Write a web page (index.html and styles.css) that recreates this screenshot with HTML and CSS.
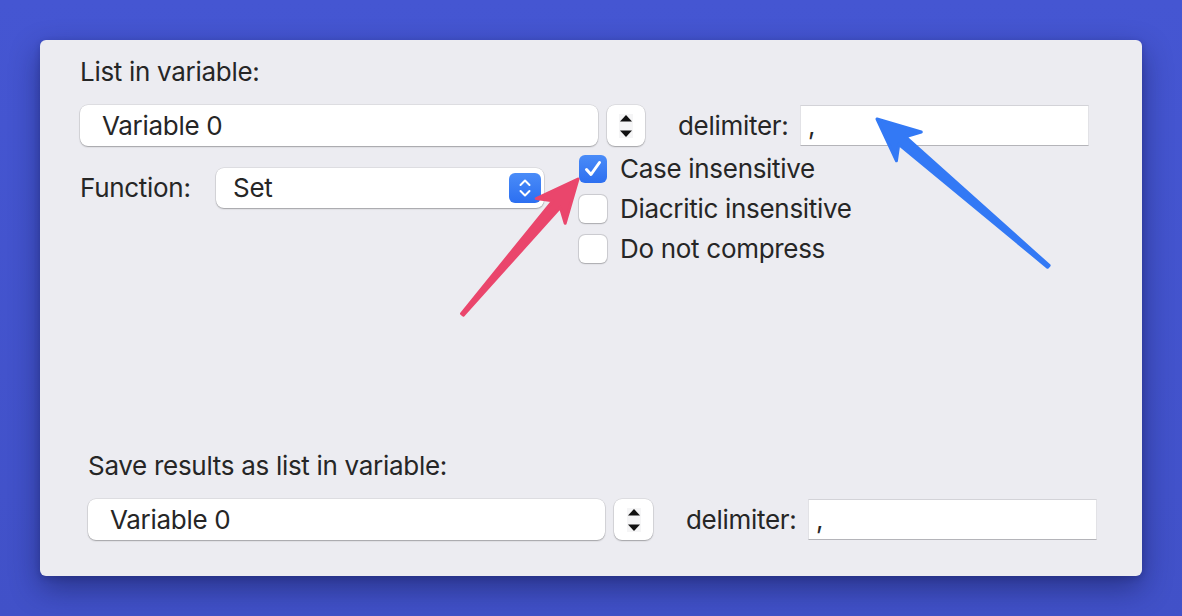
FILE: index.html
```html
<!DOCTYPE html>
<html>
<head>
<meta charset="utf-8">
<link rel="stylesheet" href="styles.css">
</head>
<body>
<div class="panel">
  <div class="section-top">
    <div class="label">List in variable:</div>
    <div class="var-row">
      <div class="popup popup-var"><span>Variable 0</span></div>
      <div class="stepper">
        <svg width="14" height="24" viewBox="0 0 14 24"><rect x="-3" y="-1" width="20" height="26" fill="#f5f5f6"/><polygon points="7,1 13,7.5 1,7.5" fill="#111"/><polygon points="1,16.5 13,16.5 7,23" fill="#111"/></svg>
      </div>
      <div class="delim-label">delimiter:</div>
      <div class="field">,</div>
    </div>
    <div class="fn-row">
      <div class="fn-group">
        <div class="fn-label">Function:</div>
        <div class="popup popup-fn">
          <span>Set</span>
          <div class="popup-btn">
            <svg width="14" height="22" viewBox="0 0 14 22"><path d="M2.5 8 L7 3.5 L11.5 8" fill="none" stroke="#fff" stroke-width="2" stroke-linecap="round" stroke-linejoin="round"/><path d="M2.5 14 L7 18.5 L11.5 14" fill="none" stroke="#fff" stroke-width="2" stroke-linecap="round" stroke-linejoin="round"/></svg>
          </div>
        </div>
      </div>
      <div class="options">
        <div class="option">
          <div class="check checked">
            <svg width="28" height="28" viewBox="0 0 28 28"><path d="M7.5 14.5 L12 19.5 L20.5 7.5" fill="none" stroke="#fff" stroke-width="3" stroke-linecap="round" stroke-linejoin="round"/></svg>
          </div>
          <span>Case insensitive</span>
        </div>
        <div class="option">
          <div class="check"></div>
          <span>Diacritic insensitive</span>
        </div>
        <div class="option">
          <div class="check"></div>
          <span>Do not compress</span>
        </div>
      </div>
    </div>
  </div>
  <div class="section-bottom">
    <div class="label">Save results as list in variable:</div>
    <div class="var-row">
      <div class="popup popup-var2"><span>Variable 0</span></div>
      <div class="stepper stepper2">
        <svg width="14" height="24" viewBox="0 0 14 24"><rect x="-3" y="-1" width="20" height="26" fill="#f5f5f6"/><polygon points="7,1 13,7.5 1,7.5" fill="#111"/><polygon points="1,16.5 13,16.5 7,23" fill="#111"/></svg>
      </div>
      <div class="delim-label">delimiter:</div>
      <div class="field">,</div>
    </div>
  </div>
</div>
<svg class="arrows" width="1182" height="616" viewBox="0 0 1182 616">
  <g transform="translate(578,179) rotate(-49.5)" fill="#ea466c" stroke="#ea466c" stroke-width="3" stroke-linejoin="round" stroke-linecap="round">
    <polygon points="0,0 -42,-19 -33,-5 -178,-1.2 -178,1.2 -33,5 -42,19"/>
  </g>
  <g transform="translate(877,119) rotate(-139.3)" fill="#3379f5" stroke="#3379f5" stroke-width="3" stroke-linejoin="round" stroke-linecap="round">
    <polygon points="0,0 -42,-19 -33,-5 -226,-1.2 -226,1.2 -33,5 -42,19"/>
  </g>
</svg>
</body>
</html>
```
FILE: styles.css
```css
* { box-sizing: border-box; }
html, body {
  margin: 0;
  padding: 0;
}
body {
  width: 1182px;
  height: 616px;
  overflow: hidden;
  background: linear-gradient(180deg, #4556d2 0%, #4151c8 100%);
  font-family: "Inter", "Liberation Sans", sans-serif;
  font-size: 26px;
  letter-spacing: -0.3px;
  color: #262626;
  position: relative;
  padding-top: 40px;
}
.panel {
  margin: 0 40px;
  width: 1102px;
  height: 536px;
  background: #ececf1;
  border-radius: 6px;
  box-shadow: 0 12px 30px rgba(10, 15, 60, 0.45), 0 2px 6px rgba(10, 15, 60, 0.2);
  display: flex;
  flex-direction: column;
}
.section-top {
  padding-left: 40px;
  padding-top: 17px;
}
.label {
  line-height: 30px;
  height: 30px;
  white-space: nowrap;
}
.var-row {
  display: flex;
  align-items: center;
  margin-top: 18px;
  height: 41px;
}
.popup {
  background: #fff;
  border-radius: 8px;
  box-shadow: 0 0 0 0.5px rgba(0, 0, 0, 0.12), 0 1px 1.5px rgba(0, 0, 0, 0.28);
  display: flex;
  align-items: center;
  height: 41px;
  line-height: 30px;
}
.popup-var {
  width: 518px;
  padding-left: 22px;
}
.popup-var2 {
  width: 517px;
  padding-left: 22px;
}
.stepper {
  width: 38px;
  height: 41px;
  margin-left: 9px;
  background: #fff;
  border-radius: 8px;
  box-shadow: 0 0 0 0.5px rgba(0, 0, 0, 0.12), 0 1px 1.5px rgba(0, 0, 0, 0.28);
  display: flex;
  align-items: center;
  justify-content: center;
}
.stepper svg { display: block; }
.stepper2 { width: 39px; }
.delim-label {
  width: 112px;
  margin-left: 33px;
  margin-right: 10px;
  line-height: 30px;
  white-space: nowrap;
}
.field {
  width: 289px;
  height: 41px;
  background: #fff;
  border-top: 1px solid #d3d3d8;
  border-left: 1px solid #e2e2e6;
  border-right: 1px solid #e2e2e6;
  border-bottom: 1.5px solid #b4b4b9;
  padding-left: 7px;
  line-height: 40px;
}
.fn-row {
  display: flex;
  align-items: flex-start;
  margin-top: 9px;
}
.fn-group {
  width: 499px;
  display: flex;
  align-items: center;
  margin-top: 13px;
}
.fn-label {
  width: 136px;
  line-height: 30px;
}
.popup-fn {
  width: 328px;
  height: 40px;
  padding-left: 17px;
  padding-right: 3px;
  justify-content: space-between;
}
.popup-btn {
  width: 32px;
  height: 30px;
  border-radius: 6px;
  background: linear-gradient(180deg, #4a8cf8 0%, #2c6ff1 100%);
  display: flex;
  align-items: center;
  justify-content: center;
}
.popup-btn svg { display: block; }
.options {
  display: flex;
  flex-direction: column;
  gap: 12px;
}
.option {
  display: flex;
  align-items: center;
  gap: 13px;
  height: 28px;
  line-height: 30px;
  white-space: nowrap;
}
.check {
  width: 28px;
  height: 28px;
  flex: none;
  border-radius: 6px;
  background: #fff;
  box-shadow: 0 0 0 1px rgba(0, 0, 0, 0.1), 0 0.5px 1.5px rgba(0, 0, 0, 0.2);
}
.check svg { display: block; }
.check.checked {
  background: linear-gradient(180deg, #4a8cf8 0%, #2d6ff0 100%);
  box-shadow: none;
}
.section-bottom {
  margin-top: auto;
  padding-left: 48px;
  padding-bottom: 36px;
}
.arrows {
  position: absolute;
  left: 0;
  top: 0;
  pointer-events: none;
}
```
